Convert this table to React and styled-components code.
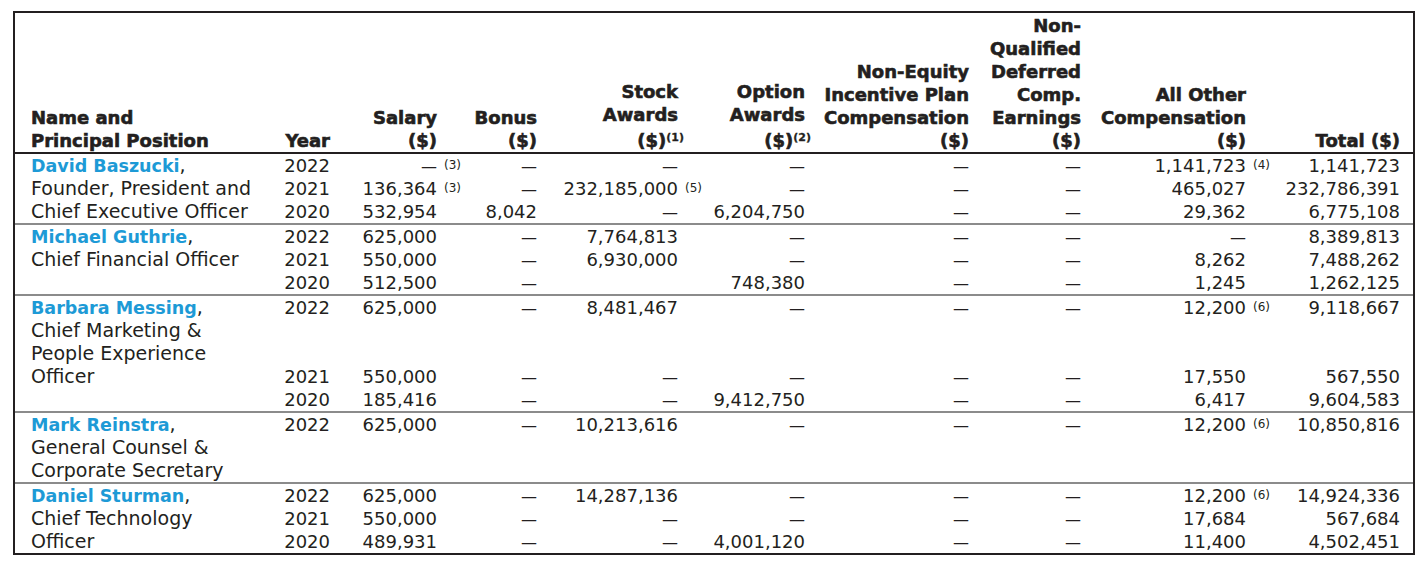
import React from 'react';
import styled, { createGlobalStyle } from 'styled-components';

const GlobalStyle = createGlobalStyle`
  body {
    margin: 0;
    background: #ffffff;
    color: #231f20;
    font-family: "DejaVu Sans", "Liberation Sans", sans-serif;
  }
`;

// name, year, salary, fn, bonus, stock, fn, option, non-equity, nqdc, all other, fn, total
const COLS = '231px 68px 107px 28px 72px 141px 27px 100px 164px 112px 165px 29px 125px';

const Page = styled.div`
  padding: 11px 0 0 13px;
`;

const Frame = styled.div`
  width: 1398px;
  border: 2px solid #231f20;
`;

const HeadRow = styled.div`
  display: grid;
  grid-template-columns: ${COLS};
  align-items: end;
  padding: 1px 13px 0 16px;
  border-bottom: 2px solid #231f20;
`;

const HeadCell = styled.div`
  font-size: 18px;
  font-weight: 700;
  line-height: 23px;
  text-align: ${(p) => (p.$left ? 'left' : 'right')};
  white-space: nowrap;
  -webkit-text-stroke: 0.6px #231f20;
`;

const HeadSup = styled.span`
  font-size: 11px;
  vertical-align: 6px;
  margin-right: -6px;
  -webkit-text-stroke: 0.3px #231f20;
`;

const Group = styled.div`
  border-top: ${(p) => (p.$first ? 'none' : '2px solid #8b8b8b')};
`;

const Line = styled.div`
  display: grid;
  grid-template-columns: ${COLS};
  height: 23px;
  padding: 0 13px 0 16px;
  line-height: 23px;
`;

const NameCell = styled.div`
  font-size: 19px;
  white-space: nowrap;
`;

const Person = styled.span`
  color: #1d9ad6;
  font-weight: 700;
  font-size: 17.5px;
`;

const Value = styled.div`
  font-size: 18px;
  text-align: right;
  white-space: nowrap;
`;

const Dash = styled.span`
  font-size: 16px;
`;

const Fn = styled.div`
  font-size: 18px;
  padding-left: 7px;
  white-space: nowrap;
`;

const FnMark = styled.span`
  font-size: 12px;
  vertical-align: 5px;
`;

const groups = [
  {
    name: 'David Baszucki',
    lines: [
      ['', '2022', '—', '(3)', '—', '—', '', '—', '—', '—', '1,141,723', '(4)', '1,141,723'],
      ['Founder, President and', '2021', '136,364', '(3)', '—', '232,185,000', '(5)', '—', '—', '—', '465,027', '', '232,786,391'],
      ['Chief Executive Officer', '2020', '532,954', '', '8,042', '—', '', '6,204,750', '—', '—', '29,362', '', '6,775,108'],
    ],
  },
  {
    name: 'Michael Guthrie',
    lines: [
      ['', '2022', '625,000', '', '—', '7,764,813', '', '—', '—', '—', '—', '', '8,389,813'],
      ['Chief Financial Officer', '2021', '550,000', '', '—', '6,930,000', '', '—', '—', '—', '8,262', '', '7,488,262'],
      ['', '2020', '512,500', '', '—', '', '', '748,380', '—', '—', '1,245', '', '1,262,125'],
    ],
  },
  {
    name: 'Barbara Messing',
    lines: [
      ['', '2022', '625,000', '', '—', '8,481,467', '', '—', '—', '—', '12,200', '(6)', '9,118,667'],
      ['Chief Marketing &'],
      ['People Experience'],
      ['Officer', '2021', '550,000', '', '—', '—', '', '—', '—', '—', '17,550', '', '567,550'],
      ['', '2020', '185,416', '', '—', '—', '', '9,412,750', '—', '—', '6,417', '', '9,604,583'],
    ],
  },
  {
    name: 'Mark Reinstra',
    lines: [
      ['', '2022', '625,000', '', '—', '10,213,616', '', '—', '—', '—', '12,200', '(6)', '10,850,816'],
      ['General Counsel &'],
      ['Corporate Secretary'],
    ],
  },
  {
    name: 'Daniel Sturman',
    lines: [
      ['', '2022', '625,000', '', '—', '14,287,136', '', '—', '—', '—', '12,200', '(6)', '14,924,336'],
      ['Chief Technology', '2021', '550,000', '', '—', '—', '', '—', '—', '—', '17,684', '', '567,684'],
      ['Officer', '2020', '489,931', '', '—', '—', '', '4,001,120', '—', '—', '11,400', '', '4,502,451'],
    ],
  },
];

const FN_COLS = [3, 6, 11];

function Cell({ index, text }) {
  if (FN_COLS.includes(index)) {
    return <Fn>{text && <FnMark>{text}</FnMark>}</Fn>;
  }
  return <Value>{text === '—' ? <Dash>—</Dash> : text}</Value>;
}

function Header() {
  return (
    <HeadRow>
      <HeadCell $left>Name and<br />Principal Position</HeadCell>
      <HeadCell>Year</HeadCell>
      <HeadCell>Salary<br />($)</HeadCell>
      <HeadCell />
      <HeadCell>Bonus<br />($)</HeadCell>
      <HeadCell>Stock<br />Awards<br />($)<HeadSup>(1)</HeadSup></HeadCell>
      <HeadCell />
      <HeadCell>Option<br />Awards<br />($)<HeadSup>(2)</HeadSup></HeadCell>
      <HeadCell>Non-Equity<br />Incentive Plan<br />Compensation<br />($)</HeadCell>
      <HeadCell>Non-<br />Qualified<br />Deferred<br />Comp.<br />Earnings<br />($)</HeadCell>
      <HeadCell>All Other<br />Compensation<br />($)</HeadCell>
      <HeadCell />
      <HeadCell>Total ($)</HeadCell>
    </HeadRow>
  );
}

export default function App() {
  return (
    <Page>
      <GlobalStyle />
      <Frame>
        <Header />
        {groups.map((g, gi) => (
          <Group key={g.name} $first={gi === 0}>
            {g.lines.map((line, li) => (
              <Line key={li}>
                <NameCell>
                  {li === 0 ? (
                    <>
                      <Person>{g.name}</Person>,
                    </>
                  ) : (
                    line[0]
                  )}
                </NameCell>
                {Array.from({ length: 12 }, (_, i) => (
                  <Cell key={i} index={i + 1} text={line[i + 1] || ''} />
                ))}
              </Line>
            ))}
          </Group>
        ))}
      </Frame>
    </Page>
  );
}
